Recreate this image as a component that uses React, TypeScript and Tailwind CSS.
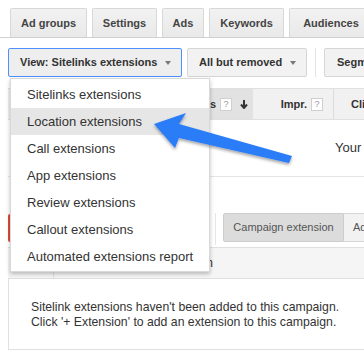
import React from "react";

const tabs = [
  { label: "Ad groups", w: "w-[77px]" },
  { label: "Settings", w: "w-[65px]" },
  { label: "Ads", w: "w-[42px]" },
  { label: "Keywords", w: "w-[75px]" },
  { label: "Audiences", w: "w-[84px]" },
];

const menuItems = [
  "Sitelinks extensions",
  "Location extensions",
  "Call extensions",
  "App extensions",
  "Review extensions",
  "Callout extensions",
  "Automated extensions report",
];

function Caret() {
  return (
    <span className="ml-[8px] inline-block h-0 w-0 border-x-[3.5px] border-t-[4px] border-x-transparent border-t-[#777]" />
  );
}

function Help() {
  return (
    <span className="ml-[4px] inline-flex h-[13px] w-[12px] items-center justify-center border border-[#cfcfcf] bg-white text-[9px] font-normal leading-none text-[#999]">
      ?
    </span>
  );
}

export default function App() {
  return (
    <div className="relative h-[363px] w-[364px] overflow-hidden bg-white font-['Liberation_Sans',Arial,sans-serif] text-[#333]">
      {/* Tabs */}
      <div className="flex h-[38px] items-end gap-[5px] border-b border-[#d0d0d0] pl-[10px]">
        {tabs.map((t) => (
          <div
            key={t.label}
            className={`flex h-[29px] shrink-0 items-center justify-center rounded-t-[2px] border border-b-0 border-[#d8d8d8] bg-gradient-to-b from-[#f2f2f2] to-[#e9e9e9] text-[11px] font-bold text-[#444] ${t.w}`}
          >
            {t.label}
          </div>
        ))}
      </div>

      {/* Toolbar */}
      <div className="mt-[10px] flex h-[29px] items-center pl-[8px]">
        <div className="flex h-[29px] w-[174px] shrink-0 items-center rounded-[2px] border border-[#4d90fe] bg-[#eeeeee] pl-[11px] text-[11px] font-bold text-[#333]">
          View: Sitelinks extensions
          <Caret />
        </div>
        <div className="ml-[5px] flex h-[29px] w-[120px] shrink-0 items-center rounded-[2px] border border-[#d6d6d6] bg-[#f2f2f2] pl-[11px] text-[11px] font-bold text-[#333]">
          All but removed
          <Caret />
        </div>
        <div className="ml-[8px] h-[29px] w-px shrink-0 bg-[#e3e3e3]" />
        <div className="ml-[8px] flex h-[29px] w-[80px] shrink-0 items-center rounded-[2px] border border-[#d6d6d6] bg-[#f2f2f2] pl-[12px] text-[11px] font-bold text-[#333]">
          Segment
        </div>
      </div>

      {/* Stats table header */}
      <div className="mt-[11px] ml-[8px] flex h-[32px] border-y border-[#e0e0e0] bg-[#f1f1f1] text-[11px] font-bold text-[#333]">
        <div className="w-[182px] shrink-0" />
        <div className="flex w-[63px] shrink-0 items-center bg-[#e2e2e2] pl-[20px]">
          s<Help />
          <svg className="ml-[8px]" width="8" height="9" viewBox="0 0 8 9">
            <path d="M4 0v7M1 4.5L4 8 7 4.5" stroke="#333" strokeWidth="2" fill="none" />
          </svg>
        </div>
        <div className="flex w-[81px] shrink-0 items-center justify-end border-r border-[#dcdcdc] pr-[10px]">
          Impr.<Help />
        </div>
        <div className="flex items-center pl-[17px]">Clicks</div>
      </div>
      <div className="ml-[8px] flex h-[57px] items-center border-b border-[#e6e6e6] pl-[327px] text-[13px] text-[#333]">
        <span className="whitespace-nowrap">Your data</span>
      </div>

      {/* Extension controls */}
      <div className="mt-[36px] flex h-[29px] items-center pl-[8px]">
        <div className="h-[28px] w-[80px] shrink-0 rounded-[2px] bg-[#dd4b39]" />
        <div className="ml-[127px] h-[32px] w-px shrink-0 self-start bg-[#e6e6e6]" />
        <div className="ml-[7px] flex h-[29px] w-[121px] shrink-0 items-center justify-center rounded-l-[2px] border border-[#cdcdcd] bg-[#dcdcdc] text-[11px] text-[#555]">
          Campaign extension
        </div>
        <div className="flex h-[29px] w-[120px] shrink-0 items-center border border-l-0 border-[#d6d6d6] bg-[#f2f2f2] pl-[9px] text-[11px] text-[#555]">
          Ad group extension
        </div>
      </div>

      {/* Extensions table */}
      <div className="mt-[5px] ml-[8px] flex h-[32px] border-y border-[#e0e0e0] bg-[#f5f5f5] text-[12px] text-[#333]">
        <div className="w-[46px] shrink-0 border-r border-[#e0e0e0]" />
        <div className="flex w-[159px] shrink-0 items-center justify-end">Extension</div>
      </div>
      <div className="ml-[8px] h-[71px] border-b border-l border-[#e0e0e0] pl-[22px] pt-[21px] text-[12.25px] leading-[15px] text-[#333]">
        <p>Sitelink extensions haven't been added to this campaign.</p>
        <p>Click '+ Extension' to add an extension to this campaign.</p>
      </div>

      {/* Dropdown menu */}
      <div className="absolute left-[10px] top-[78px] w-[200px] border border-[#d9d9d9] bg-white pb-px pt-[2px] shadow-[0_2px_4px_rgba(0,0,0,0.25)]">
        {menuItems.map((item, i) => (
          <div
            key={item}
            className={`flex h-[27px] items-center pl-[16px] text-[13px] text-[#333] ${i === 1 ? "bg-[#e6e6e6]" : ""}`}
          >
            {item}
          </div>
        ))}
      </div>

      {/* Callout arrow */}
      <svg className="pointer-events-none absolute left-0 top-0" width="364" height="363" viewBox="0 0 364 363">
        <defs>
          <filter id="sh" x="-10%" y="-30%" width="130%" height="180%">
            <feDropShadow dx="0" dy="2" stdDeviation="1.5" floodColor="#000" floodOpacity="0.35" />
          </filter>
        </defs>
        <polygon
          points="154,124 186,113 179,124 292,156 289,163 179,138 175,148"
          fill="#2a7cf7"
          filter="url(#sh)"
        />
      </svg>
    </div>
  );
}
